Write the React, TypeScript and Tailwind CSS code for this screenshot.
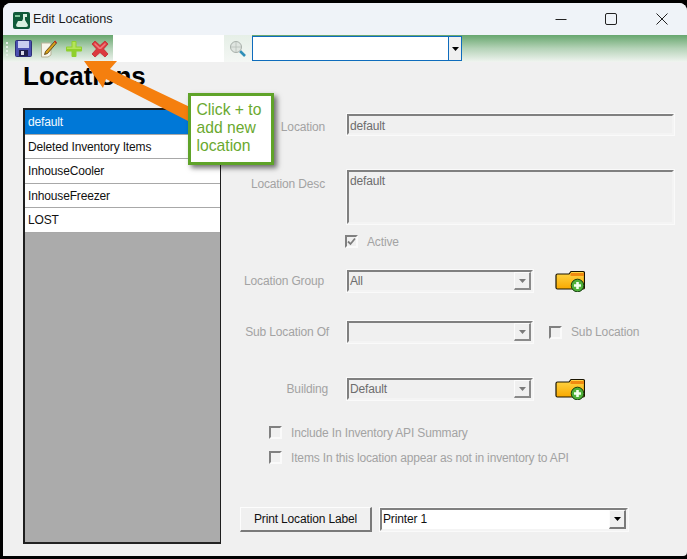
import React from "react";

const sunken = "border-2 border-t-[#808080] border-l-[#808080] border-b-[#f4f4f4] border-r-[#f4f4f4] outline outline-1 outline-[#fafafa]";

function ArrowDown({ color = "#7a7a7a" }: { color?: string }) {
  return (
    <svg width="7" height="4" viewBox="0 0 7 4">
      <path d="M0 0H7L3.5 4Z" fill={color} />
    </svg>
  );
}

function Folder() {
  return (
    <svg width="30" height="22" viewBox="0 0 30 22" className="block">
      <defs>
        <linearGradient id="fold" x1="0" y1="0" x2="0" y2="1">
          <stop offset="0" stopColor="#ffd84a" />
          <stop offset="1" stopColor="#f9a800" />
        </linearGradient>
      </defs>
      <path d="M1 5.500Q1 4 2.500 4H14L16 1.500H28Q29.500 1.500 29.500 3V17.500Q29.500 19 28 19H2.500Q1 19 1 17.500Z" fill="url(#fold)" stroke="#1a1400" strokeWidth="1.2" />
      <path d="M15.500 3H29V6H15.500Z" fill="#f08a10" />
      <circle cx="22.500" cy="15.500" r="6.300" fill="#4fb03a" stroke="#173f10" strokeWidth="1" />
      <path d="M22.500 12V19M19 15.500H26" stroke="#f4fff0" strokeWidth="2.600" />
    </svg>
  );
}

function Combo({ value, width = "w-[186px]" }: { value: string; width?: string }) {
  return (
    <div className={`${width} h-[22px] ${sunken} flex items-stretch justify-between bg-[#f0f0f0]`}>
      <span className="pl-[1px] leading-[19px] text-[#6d6d6d]">{value}</span>
      <div className="w-[17px] flex items-center justify-center border-b-2 border-r-2 border-[#8a8a8a] border-l border-l-[#fcfcfc] border-t border-t-[#fcfcfc] bg-[#f0f0f0]">
        <ArrowDown />
      </div>
    </div>
  );
}

function Check({ checked = false }: { checked?: boolean }) {
  return (
    <div className="w-[13px] h-[13px] shrink-0 border-2 border-t-[#808080] border-l-[#808080] border-b-[#fafafa] border-r-[#fafafa] bg-[#f0f0f0] flex items-center justify-center">
      {checked && (
        <svg width="9" height="9" viewBox="0 0 9 9">
          <path d="M1 4.500L3.500 7L8 1.500" fill="none" stroke="#7d7d7d" strokeWidth="1.800" />
        </svg>
      )}
    </div>
  );
}

function Label({ children }: { children: React.ReactNode }) {
  return <div className="w-[107px] shrink-0 text-right text-[#a3a3a3]">{children}</div>;
}

const items = ["default", "Deleted Inventory Items", "InhouseCooler", "InhouseFreezer", "LOST"];

export default function App() {
  return (
    <div className="relative w-[687px] h-[559px] bg-black pt-[3px] pl-[3px] pb-[3px] overflow-hidden text-[12px] tracking-[-0.15px] font-['Liberation_Sans',Arial,sans-serif]">
      <div className="h-full flex flex-col bg-[#f0f0f0] rounded-t-[8px] overflow-hidden rounded-br-[4px]">
        {/* title bar */}
        <div className="h-[32px] shrink-0 bg-[#eff3f8] flex items-center pl-[10px]">
          <svg width="17" height="17" viewBox="0 0 17 17" className="mt-[2px]">
            <rect width="17" height="17" rx="2" fill="#0f5a3a" />
            <path d="M10 2H14V5H12V8L15 13Q15 15 13 15H5Q3 15 3 13L5 9H9L10 7Z" fill="#d8efe0" />
            <rect x="2" y="3" width="5" height="2" fill="#7fc79c" />
          </svg>
          <span className="ml-[3px] text-[#1a1a1a] text-[12.700px] tracking-normal mt-[1px]">Edit Locations</span>
          <div className="ml-auto flex items-center pr-[19px]">
            <svg width="12" height="12" viewBox="0 0 12 12" className="mr-[38px]"><path d="M0.500 6.500H11.500" stroke="#222" strokeWidth="1" /></svg>
            <svg width="12" height="12" viewBox="0 0 12 12" className="mr-[39px]"><rect x="0.500" y="0.500" width="11" height="11" rx="1.500" fill="none" stroke="#222" /></svg>
            <svg width="12" height="12" viewBox="0 0 12 12"><path d="M0.500 0.500L11.500 11.500M11.500 0.500L0.500 11.500" stroke="#222" strokeWidth="1" /></svg>
          </div>
        </div>

        {/* toolbar */}
        <div className="h-[27px] shrink-0 flex items-stretch bg-gradient-to-b from-[#66a66e] via-[#b5d3b8] to-[#f0f4f0]">
          <div className="w-[110px] shrink-0 flex items-center pl-[3px]">
            <div className="flex flex-col gap-[2px] mr-[7px]">
              <i className="block w-[2px] h-[2px] bg-[#e4efe6]" />
              <i className="block w-[2px] h-[2px] bg-[#e4efe6]" />
              <i className="block w-[2px] h-[2px] bg-[#e4efe6]" />
              <i className="block w-[2px] h-[2px] bg-[#e4efe6]" />
            </div>
            <svg width="17" height="17" viewBox="0 0 17 17" className="mr-[8px]">
              <rect x="0.500" y="0.500" width="16" height="16" rx="1" fill="#4a4fb0" stroke="#2e2f78" />
              <rect x="3" y="1" width="11" height="7" fill="#c9cdf0" />
              <rect x="4" y="10" width="9" height="6" fill="#20204a" />
              <rect x="6" y="11" width="3" height="4" fill="#d9dbe8" />
            </svg>
            <svg width="17" height="18" viewBox="0 0 17 18" className="mr-[8px]">
              <path d="M1.500 3H11V15L8 17H1.500Z" fill="#f8f6ea" stroke="#b7b39a" />
              <path d="M15 1L5.500 11.500L4.500 14.500L7.500 13.500L16.500 3Z" fill="#d9a21c" stroke="#4a3510" strokeWidth="0.800" />
              <path d="M14 1.500L16 3.500L16.800 2.400L15.200 0.600Z" fill="#c72d22" />
            </svg>
            <svg width="18" height="18" viewBox="0 0 18 18" className="mr-[8px]">
              <path d="M6.500 2Q6.500 1 7.500 1H10.500Q11.500 1 11.500 2V6.500H16Q17 6.500 17 7.500V10.500Q17 11.500 16 11.500H11.500V16Q11.500 17 10.500 17H7.500Q6.500 17 6.500 16V11.500H2Q1 11.500 1 10.500V7.500Q1 6.500 2 6.500H6.500Z" fill="#8fd02c" />
              <path d="M7.500 2H10.500V7.500H16V9H2V7.500H7.500Z" fill="#b4e45a" />
            </svg>
            <svg width="18" height="18" viewBox="0 0 18 18">
              <path d="M1 4L4 1L9 5.500L14 1L17 4L12.500 9L17 14L14 17L9 12.500L4 17L1 14L5.500 9Z" fill="#dc3a3f" stroke="#c22a30" strokeWidth="0.800" strokeLinejoin="round" />
              <path d="M3 4L4 3L9 7.500L14 3L15 4L10 9H8Z" fill="#ef7a7c" />
            </svg>
          </div>
          <div className="w-[111px] shrink-0 bg-white" />
          <div className="w-[28px] shrink-0 flex items-center justify-center bg-gradient-to-b from-[#e6efe7] to-[#f4f7f4]">
            <svg width="18" height="18" viewBox="0 0 18 18">
              <path d="M11 11L16 16" stroke="#2f8fb8" strokeWidth="2.600" />
              <circle cx="7" cy="7" r="5.500" fill="#dfe5e0" stroke="#a8b0aa" />
              <path d="M2 7H12M7 2V12" stroke="#b8c0ba" strokeWidth="0.800" />
            </svg>
          </div>
          <div className="w-[210px] shrink-0 my-[1px] border border-[#0f6cbd] bg-white flex justify-end">
            <div className="w-[13px] bg-[#f0f0f0] border-l border-[#0f6cbd] flex items-center justify-center">
              <ArrowDown color="#000" />
            </div>
          </div>
        </div>

        {/* body */}
        <div className="relative flex-1 flex flex-col pl-[20px]">
          <h1 className="text-[26px] font-bold leading-[28px] tracking-normal text-black">Locations</h1>
          <div className="flex flex-1 mt-[18px] pb-[12px]">
            {/* list */}
            <div className="w-[198px] shrink-0 bg-[#ababab] border-2 border-[#1e1e1e] border-b-[#222] border-r-[1px] flex flex-col">
              {items.map((t, i) => (
                <div
                  key={t}
                  className={`h-[24.500px] pl-[3px] leading-[25px] border-b border-[#a8a8a8] ${i === 0 ? "bg-[#0078d7] text-[#f4f8fc]" : "bg-white text-[#111]"}`}
                >
                  {t}
                </div>
              ))}
            </div>

            {/* form */}
            <div className="flex-1 flex flex-col ml-[19px] pt-[6px]">
              <div className="flex items-start">
                <Label><span className="leading-[26px] pr-[22px]">Location</span></Label>
                <div className={`w-[327px] h-[21px] ${sunken} bg-[#f0f0f0] pl-[1px] leading-[21px] text-[#6d6d6d]`}>default</div>
              </div>
              <div className="flex items-start mt-[30px]">
                <Label><span className="leading-[28px] pr-[22px]">Location Desc</span></Label>
                <div className={`w-[327px] h-[54px] ${sunken} bg-[#f0f0f0] pl-[1px] leading-[18px] text-[#6d6d6d]`}>default</div>
              </div>
              <div className="flex items-center mt-[11px] pl-[105px] h-[13px]">
                <Check checked />
                <span className="ml-[9px] text-[#a3a3a3]">Active</span>
              </div>
              <div className="flex items-center mt-[22px] h-[22px]">
                <Label><span className="pr-[23px]">Location Group</span></Label>
                <Combo value="All" />
                <div className="ml-[22px]"><Folder /></div>
              </div>
              <div className="flex items-center mt-[29px] h-[22px]">
                <Label><span className="pr-[18px]">Sub Location Of</span></Label>
                <Combo value="" />
                <div className="ml-[16px]"><Check /></div>
                <span className="ml-[9px] text-[#a3a3a3]">Sub Location</span>
              </div>
              <div className="flex items-center mt-[35px] h-[22px]">
                <Label><span className="pr-[19px]">Building</span></Label>
                <Combo value="Default" />
                <div className="ml-[22px]"><Folder /></div>
              </div>
              <div className="flex items-center mt-[26px] pl-[29px] h-[13px]">
                <Check />
                <span className="ml-[9px] text-[#a3a3a3]">Include In Inventory API Summary</span>
              </div>
              <div className="flex items-center mt-[12px] pl-[29px] h-[13px]">
                <Check />
                <span className="ml-[9px] text-[#a3a3a3]">Items In this location appear as not in inventory to API</span>
              </div>
              <div className="flex items-center mt-[43px]">
                <button className="w-[132px] h-[25px] bg-[#f0f0f0] text-[#111] border border-t-[#fdfdfd] border-l-[#fdfdfd] border-b-2 border-r-2 border-b-[#7a7a7a] border-r-[#7a7a7a]">
                  Print Location Label
                </button>
                <div className={`ml-[8px] w-[248px] h-[23px] ${sunken} bg-white flex justify-between`}>
                  <span className="pl-[1px] leading-[19px] text-[#111]">Printer 1</span>
                  <div className="w-[17px] flex items-center justify-center border-b-2 border-r-2 border-[#7a7a7a] border-l border-l-[#fcfcfc] border-t border-t-[#fcfcfc] bg-[#f0f0f0]">
                    <ArrowDown color="#000" />
                  </div>
                </div>
              </div>
            </div>
          </div>
        </div>
      </div>

      {/* annotation arrow */}
      <svg className="absolute left-0 top-0 pointer-events-none" width="687" height="559" viewBox="0 0 687 559">
        <path d="M84 61H117L110 69L192 108L190 122L106 79L103 88Z" fill="#f57f0e" />
      </svg>

      {/* callout */}
      <div className="absolute left-[188px] top-[93px] w-[86px] h-[72px] bg-white border-[3px] border-[#5fa329] pl-[5.500px] pt-[5px] text-[15.700px] leading-[18px] tracking-normal text-[#6aa92f] shadow-[3px_3px_5px_rgba(0,0,0,0.55)]">
        Click + to add new location
      </div>
    </div>
  );
}
